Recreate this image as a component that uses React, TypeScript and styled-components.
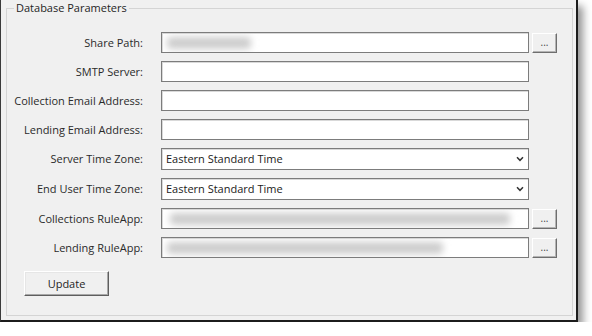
import React from "react";
import styled, { createGlobalStyle } from "styled-components";

const Global = createGlobalStyle`
  html, body { margin: 0; padding: 0; background: #ffffff; }
  body { font-family: "Open Sans", "Noto Sans", sans-serif; font-size: 11px; color: #1e1e1e; }
  * { box-sizing: border-box; }
`;

const Window = styled.div`
  width: 578px;
  height: 322px;
  display: flex;
  flex-direction: column;
  background: #f0f0f0;
  border-left: 1px solid #3a3a3a;
  border-right: 2px solid #1c1c1c;
  border-bottom: 2px solid #1c1c1c;
  box-shadow: 5px 6px 8px rgba(0, 0, 0, 0.42);
  padding: 0 3px 4px 5px;
`;

const Group = styled.fieldset`
  flex: 1;
  margin: 0;
  padding: 16px 0 0 0;
  border: 1px solid #d4d4d4;
  min-width: 0;
`;

const Legend = styled.legend`
  margin-left: 7px;
  padding: 0 2px;
  font-size: 11px;
  line-height: 16px;
  color: #1e1e1e;
`;

const Form = styled.div`
  display: grid;
  grid-template-columns: 154px 368px 28px;
  grid-template-rows: 21px 21px 21px 21px 22px 22px 21px 21px;
  row-gap: 8px;
  align-items: center;
`;

const Label = styled.div`
  justify-self: end;
  padding-right: 18px;
  line-height: 16px;
  color: #2a2a2a;
  white-space: nowrap;
`;

const TextBox = styled.div<{ $tall?: boolean }>`
  height: ${(p) => (p.$tall ? 22 : 21)}px;
  align-self: start;
  background: #ffffff;
  border: 1px solid #7c7c7c;
  box-shadow: inset 1px 1px 0 #d9d9d9;
  display: flex;
  align-items: center;
  padding: 0 ${(p) => (p.$tall ? 4 : 8)}px 0 4px;
  overflow: hidden;
`;

const Redacted = styled.span`
  display: block;
  height: 12px;
  background: #cdcdcd;
  filter: blur(3.5px);
  border-radius: 4px;
`;

const ComboText = styled.span`
  flex: 1;
  line-height: 16px;
  color: #1a1a1a;
`;

const BrowseButton = styled.button`
  justify-self: end;
  align-self: start;
  width: 25px;
  height: 20px;
  margin-top: 1px;
  font-family: inherit;
  font-size: 10px;
  line-height: 10px;
  color: #444;
  background: #f0f0f0;
  border-top: 1px solid #ffffff;
  border-left: 1px solid #ffffff;
  border-right: 1px solid #6e6e6e;
  border-bottom: 1px solid #6e6e6e;
  box-shadow: inset -1px -1px 0 #b4b4b4;
  display: flex;
  align-items: flex-end;
  justify-content: center;
  padding: 0 0 5px 0;
`;

const Spacer = styled.div``;

const Row = styled.div`
  display: contents;
`;

const Footer = styled.div`
  padding: 13px 0 0 17px;
`;

const UpdateButton = styled.button`
  width: 85px;
  height: 25px;
  padding: 0;
  font-family: inherit;
  font-size: 11px;
  color: #1e1e1e;
  background: #f0f0f0;
  border-top: 1px solid #ffffff;
  border-left: 1px solid #ffffff;
  border-right: 1px solid #5e5e5e;
  border-bottom: 1px solid #5e5e5e;
  box-shadow: inset -1px -1px 0 #a8a8a8, inset 1px 1px 0 #e6e6e6;
`;

const Chevron = () => (
  <svg width="8" height="6" viewBox="0 0 8 6" aria-hidden="true">
    <path d="M1 1.2 L4 4.3 L7 1.2" fill="none" stroke="#333" strokeWidth="1.5" />
  </svg>
);

type RowDef =
  | { label: string; kind: "text"; blur?: [number, number]; browse?: boolean }
  | { label: string; kind: "combo"; value: string };

const rows: RowDef[] = [
  { label: "Share Path:", kind: "text", blur: [1, 84], browse: true },
  { label: "SMTP Server:", kind: "text" },
  { label: "Collection Email Address:", kind: "text" },
  { label: "Lending Email Address:", kind: "text" },
  { label: "Server Time Zone:", kind: "combo", value: "Eastern Standard Time" },
  { label: "End User Time Zone:", kind: "combo", value: "Eastern Standard Time" },
  { label: "Collections RuleApp:", kind: "text", blur: [4, 340], browse: true },
  { label: "Lending RuleApp:", kind: "text", blur: [1, 276], browse: true },
];

export default function App() {
  return (
    <>
      <Global />
      <Window>
        <Group>
          <Legend>Database Parameters</Legend>
          <Form>
            {rows.map((r) => (
              <Row key={r.label}>
                <Label>{r.label}</Label>
                {r.kind === "combo" ? (
                  <TextBox $tall>
                    <ComboText>{r.value}</ComboText>
                    <Chevron />
                  </TextBox>
                ) : (
                  <TextBox>
                    {r.blur && (
                      <Redacted style={{ marginLeft: r.blur[0], width: r.blur[1] }} />
                    )}
                  </TextBox>
                )}
                {r.kind === "text" && r.browse ? (
                  <BrowseButton>...</BrowseButton>
                ) : (
                  <Spacer />
                )}
              </Row>
            ))}
          </Form>
          <Footer>
            <UpdateButton>Update</UpdateButton>
          </Footer>
        </Group>
      </Window>
    </>
  );
}
